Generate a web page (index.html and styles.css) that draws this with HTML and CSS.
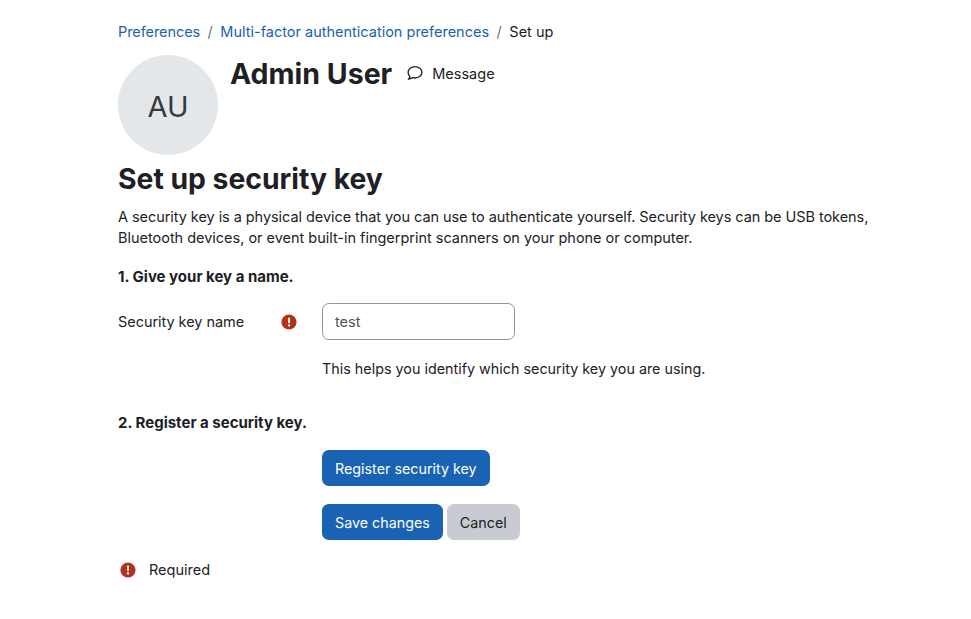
FILE: index.html
```html
<!DOCTYPE html>
<html lang="en">
<head>
<meta charset="utf-8">
<title>Set up security key</title>
<link rel="stylesheet" href="styles.css">
</head>
<body>
<main class="page">
  <nav class="crumbs">
    <a class="crumb-first" href="#">Preferences</a><span class="sep">/</span><a href="#">Multi-factor authentication preferences</a><span class="sep">/</span><span>Set up</span>
  </nav>
  <header class="user">
    <div class="avatar"><span class="initials">AU</span></div>
    <div class="user-line">
      <h2 class="name">Admin User</h2>
      <a class="msg" href="#">
        <svg class="msg-icon" viewBox="0 0 16 16" width="16" height="16" aria-hidden="true"><path d="M8 1.6c3.7 0 6.9 2.5 6.9 5.7S11.7 13 8 13c-.9 0-1.8-.15-2.6-.42-.9.8-2.2 1.5-4 1.6.8-.85 1.3-1.8 1.5-2.8C1.8 10.3 1.1 8.9 1.1 7.3 1.1 4.1 4.3 1.6 8 1.6z" fill="none" stroke="#1d2125" stroke-width="1.35" stroke-linejoin="round"/></svg>
        <span>Message</span>
      </a>
    </div>
  </header>
  <h2 class="title">Set up security key</h2>
  <p class="intro"><span class="line line-a">A security key is a physical device that you can use to authenticate yourself. Security keys can be USB tokens,</span> <span class="line line-b">Bluetooth devices, or event built-in fingerprint scanners on your phone or computer.</span></p>
  <h3 class="step step-one">1. Give your key a name.</h3>
  <form class="form">
    <div class="row row-name">
      <label class="label" for="key">Security key name</label>
      <svg class="req" viewBox="0 0 16 16" width="16" height="16" aria-hidden="true"><circle cx="8" cy="8" r="7.6" fill="#b3321c"/><rect x="7" y="3.6" width="2" height="5.6" rx="1" fill="#fff"/><circle cx="8" cy="11.4" r="1.15" fill="#fff"/></svg>
      <input class="input" id="key" type="text" value="test">
    </div>
    <p class="help">This helps you identify which security key you are using.</p>
    <h3 class="step step-two">2. Register a security key.</h3>
    <div class="actions"><button class="btn primary" type="button">Register security key</button></div>
    <div class="actions buttons-row"><button class="btn primary" type="button">Save changes</button><button class="btn secondary" type="button">Cancel</button></div>
    <div class="required">
      <svg class="req" viewBox="0 0 16 16" width="16" height="16" aria-hidden="true"><circle cx="8" cy="8" r="7.6" fill="#b3321c"/><rect x="7" y="3.6" width="2" height="5.6" rx="1" fill="#fff"/><circle cx="8" cy="11.4" r="1.15" fill="#fff"/></svg>
      <span>Required</span>
    </div>
  </form>
</main>
</body>
</html>
```
FILE: styles.css
```css
* { box-sizing: border-box; }
html, body { margin: 0; background: #fff; }
body {
  font-family: Inter, "Liberation Sans", sans-serif;
  font-size: 14.5px;
  line-height: 21px;
  color: #1d2125;
}
a { color: #1a62b4; text-decoration: none; }
.page { width: 971px; height: 619px; padding: 21px 50px 0 118px; overflow: hidden; }
.crumbs { display: flex; height: 21px; }
.crumb-first { letter-spacing: -.08px; }
.sep { margin: 0 7.5px; color: #6a737b; }
.user { display: flex; margin-top: 13px; }
.avatar {
  width: 100px; height: 100px; border-radius: 50%;
  background: #e4e7ea; color: #343a40;
  display: flex; align-items: center; justify-content: center;
  font-size: 29px; line-height: 1;
}
.initials { padding-top: 2px; }
.user-line { display: flex; align-items: center; height: 38px; margin-left: 12px; }
.name { margin: 0; font-size: 28.5px; line-height: 38px; font-weight: 700; }
.msg { display: flex; align-items: center; color: #1d2125; margin-left: 15px; line-height: 19px; padding-bottom: 2px; }
.msg-icon { margin-right: 9px; }
.title { margin: 4px 0 0; font-size: 28.3px; line-height: 40px; font-weight: 700; }
.intro { margin: 7px 0 0; }
.line { display: block; }
.line-a { letter-spacing: -.06px; }
.line-b { letter-spacing: -.02px; }
.step { margin: 0; font-size: 15px; line-height: 21px; font-weight: 700; }
.step-one { margin-top: 18px; }
.row-name { display: flex; align-items: center; margin-top: 16px; }
.label { width: 163px; letter-spacing: -.05px; }
.req { display: block; flex: none; }
.input {
  width: 193px; height: 37px; margin-left: 25px; padding: 0 12px;
  border: 1px solid #8f959e; border-radius: 7px;
  font: inherit; color: #4b5258; background: #fff;
}
.help { margin: 18px 0 0 204px; font-size: 14.35px; }
.step-two { margin-top: 33px; }
.actions { margin: 17px 0 0 204px; display: flex; gap: 4px; }
.buttons-row { margin-top: 18px; }
.btn {
  height: 36px; padding: 0 13px; border: 0; border-radius: 7px;
  font: inherit; font-size: 14.3px; cursor: pointer;
}
.primary { background: #1a62b4; color: #fff; }
.secondary { background: #c8ccd2; color: #1d2125; }
.required { display: flex; align-items: center; margin-top: 19px; margin-left: 2px; }
.required span { margin-left: 13px; }
```
